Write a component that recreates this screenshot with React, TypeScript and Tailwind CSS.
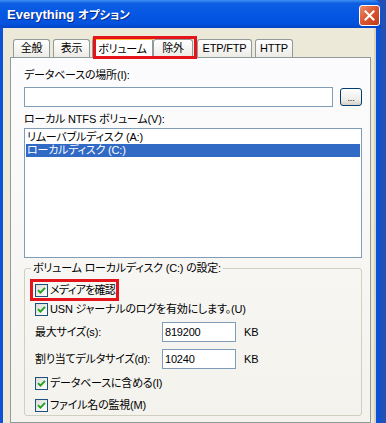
function Check() {
  return (
    <span className="w-[13px] h-[13px] shrink-0 border border-[#1C5180] bg-[linear-gradient(135deg,#DCDCD7,#FFFFFF)] flex items-center justify-center">
      <svg width="9" height="9" viewBox="0 0 9 9">
        <path d="M1 4.2 L3.4 6.6 L8 1.8" stroke="#21A121" strokeWidth="1.9" fill="none" />
      </svg>
    </span>
  );
}

function CheckRow({ label, className = "", labelClass = "" }: { label: string; className?: string; labelClass?: string }) {
  return (
    <div className={"flex items-center gap-[2px] " + className}>
      <Check />
      <span className={labelClass}>{label}</span>
    </div>
  );
}

function Tab({ label, w, ml, selected }: { label: string; w: number; ml: number; selected?: boolean }) {
  if (selected) {
    return (
      <div
        style={{ width: w, marginLeft: ml }}
        className="relative z-10 -mb-px h-[21px] bg-white border border-[#919B9C] border-b-0 border-t-0 rounded-t-[3px] flex flex-col"
      >
        <div className="h-[3px] rounded-t-[3px] bg-[linear-gradient(to_bottom,#E68B2C,#FFC83C)] -mx-px" />
        <div className="flex-1 flex items-center justify-center">{label}</div>
      </div>
    );
  }
  return (
    <div
      style={{ width: w, marginLeft: ml }}
      className="h-[18px] bg-[linear-gradient(to_bottom,#FFFFFF,#ECEBE6)] border border-[#919B9C] border-b-0 rounded-t-[3px] flex items-center justify-center"
    >
      {label}
    </div>
  );
}

export default function App() {
  return (
    <div className="relative w-[386px] h-[423px] overflow-hidden bg-[#2450B4] flex font-['Liberation_Sans','Noto_Sans_CJK_JP',sans-serif] text-[11px] leading-[13px] tracking-[-0.2px] text-black [font-feature-settings:'palt']">
      <div className="w-[381px] h-full flex flex-col bg-[#0B52D6] rounded-tr-[7px]">
        {/* title bar */}
        <div className="h-[28px] shrink-0 flex items-center pl-[7px] pr-[1px] rounded-tr-[7px] bg-[linear-gradient(to_bottom,#3D8EF2_0%,#0E5EE2_12%,#0557E4_50%,#0352DE_85%,#0244C6_100%)]">
          <div className="flex-1 text-white font-bold text-[13px] tracking-normal [text-shadow:1px_1px_#0A2A8A] pt-[2px]">
            Everything <span className="text-[11.5px]">オプション</span>
          </div>
          <div className="w-[21px] h-[21px] mt-[3px] rounded-[3px] border border-white bg-[linear-gradient(135deg,#EC8C6C,#D9552F_50%,#C03A17)] flex items-center justify-center">
            <svg width="11" height="11" viewBox="0 0 11 11">
              <path d="M1.5 1.5 L9.5 9.5 M9.5 1.5 L1.5 9.5" stroke="white" strokeWidth="2" strokeLinecap="square" />
            </svg>
          </div>
        </div>

        {/* body */}
        <div className="flex-1 ml-[3px] mr-[5px] bg-[#ECE9D8] border-r-2 border-[#D9D3BD] flex flex-col pl-[7px] pr-[1px]">
          <div className="flex items-end pt-[9px] pl-[3px] h-[29px] shrink-0">
            <Tab label="全般" w={37} ml={0} />
            <Tab label="表示" w={37} ml={3} />
            <Tab label="ボリューム" w={61} ml={2} selected />
            <Tab label="除外" w={40} ml={0} />
            <Tab label="ETP/FTP" w={55} ml={4} />
            <Tab label="HTTP" w={38} ml={3} />
          </div>

          <div className="w-[361px] flex-1 border border-[#919B9C] bg-[linear-gradient(to_bottom,#FCFCFE,#F3F2EC)] pt-[11px] pl-[13px] pr-[8px] flex flex-col">
            <div>データベースの場所(I):</div>
            <div className="mt-[5px] flex items-center gap-[7px]">
              <div className="flex-1 h-[20px] border border-[#7F9DB9] bg-white" />
              <div className="w-[22px] h-[18px] rounded-[3px] border border-[#003C74] bg-[linear-gradient(to_bottom,#FFFFFF,#ECEBE6_70%,#D6D0C5)] flex items-end justify-center pb-[2px] text-[9px] leading-[9px]">
                ...
              </div>
            </div>
            <div className="mt-[6px]">ローカル NTFS ボリューム(V):</div>
            <div className="mt-[2px] h-[130px] border border-[#7F9DB9] bg-white pt-[2px] pl-px pr-px flex flex-col">
              <div className="h-[13px] pl-px">リムーバブルディスク (A:)</div>
              <div className="h-[13px] pl-px bg-[#316AC5] text-white">ローカルディスク (C:)</div>
            </div>

            <fieldset className="mt-[4px] border border-[#D0D0BF] rounded-[3px] pl-[10px] pb-px">
              <legend className="-ml-[4px] px-[2px] leading-[13px]">ボリューム ローカルディスク (C:) の設定:</legend>
              <CheckRow label="メディアを確認" labelClass="tracking-[-0.7px]" className="mt-[6px] h-[19px]" />
              <CheckRow label="USN ジャーナルのログを有効にします。(U)" className="h-[19px]" />
              <div className="mt-[3px] flex items-center h-[20px]">
                <span className="w-[127px]">最大サイズ(s):</span>
                <div className="w-[74px] h-[20px] border border-[#7F9DB9] bg-white pl-[2px] flex items-center">819200</div>
                <span className="ml-[8px]">KB</span>
              </div>
              <div className="mt-[7px] flex items-center h-[20px]">
                <span className="w-[127px]">割り当てデルタサイズ(d):</span>
                <div className="w-[74px] h-[20px] border border-[#7F9DB9] bg-white pl-[2px] flex items-center">10240</div>
                <span className="ml-[8px]">KB</span>
              </div>
              <CheckRow label="データベースに含める(I)" className="mt-[5px] h-[19px]" />
              <CheckRow label="ファイル名の監視(M)" className="mt-[4px] h-[17px]" />
            </fieldset>
          </div>
        </div>
      </div>

      {/* red highlight boxes */}
      <div className="absolute left-[93px] top-[36px] w-[104px] h-[23px] border-[3px] border-[#E5141B] z-20" />
      <div className="absolute left-[30px] top-[279px] w-[89px] h-[22px] border-[3px] border-[#E5141B] z-20" />
    </div>
  );
}
